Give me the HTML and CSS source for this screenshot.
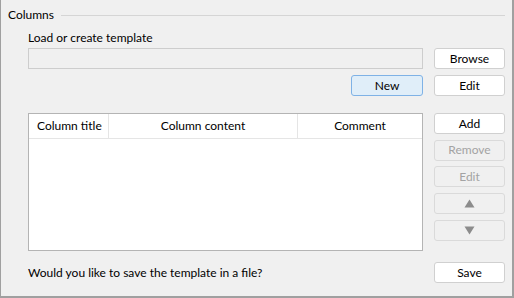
FILE: index.html
```html
<!DOCTYPE html>
<html>
<head>
<meta charset="utf-8">
<link rel="stylesheet" href="styles.css">
</head>
<body>
<div class="frame">
  <div class="legend">
    <span class="legend-text">Columns</span>
    <span class="legend-line"></span>
  </div>
  <div class="content">
    <div class="label">Load or create template</div>
    <div class="row row1">
      <div class="field"></div>
      <button class="btn">Browse</button>
    </div>
    <div class="row row2">
      <div class="main-right"><button class="btn btn-default">New</button></div>
      <button class="btn">Edit</button>
    </div>
    <div class="row row3">
      <div class="table">
        <div class="thead">
          <div class="th th-title">Column title</div>
          <div class="th th-content">Column content</div>
          <div class="th th-comment">Comment</div>
        </div>
      </div>
      <div class="side">
        <button class="btn">Add</button>
        <button class="btn disabled">Remove</button>
        <button class="btn disabled">Edit</button>
        <button class="btn disabled arrow"><svg width="11" height="9" viewBox="0 0 11 9"><polygon points="5.5,0.5 10.5,8.5 0.5,8.5" fill="#8c8c8c"/></svg></button>
        <button class="btn disabled arrow"><svg width="11" height="9" viewBox="0 0 11 9"><polygon points="0.5,0.5 10.5,0.5 5.5,8.5" fill="#8c8c8c"/></svg></button>
      </div>
    </div>
    <div class="row row4">
      <div class="question">Would you like to save the template in a file?</div>
      <button class="btn">Save</button>
    </div>
  </div>
</div>
</body>
</html>
```

FILE: styles.css
```css
html, body {
  margin: 0;
  padding: 0;
  background: #f0f0f0;
}
.frame {
  width: 514px;
  height: 298px;
  box-sizing: border-box;
  border-left: 1px solid #a0a0a0;
  border-right: 2px solid #a0a0a0;
  border-bottom: 2px solid #a0a0a0;
  background: #f0f0f0;
  font-family: "Segoe UI", Lato, "Noto Sans", sans-serif;
  font-size: 12px;
  color: #000;
  padding-right: 7px;
}
.legend {
  display: flex;
  align-items: center;
  height: 16px;
  padding-top: 7px;
  padding-left: 7px;
}
.legend-text {
  line-height: 16px;
}
.legend-line {
  flex: 1;
  height: 1px;
  background: #d5d5d5;
  margin-left: 7px;
}
.content {
  padding-left: 27px;
}
.label {
  margin-top: 7px;
  line-height: 16px;
  height: 16px;
}
.row {
  display: grid;
  grid-template-columns: 1fr 71px;
  column-gap: 11px;
}
.row1 {
  margin-top: 2px;
}
.row2 {
  margin-top: 6px;
}
.row3 {
  margin-top: 17px;
}
.row4 {
  margin-top: 11px;
  align-items: center;
}
.field {
  height: 21px;
  box-sizing: border-box;
  border: 1px solid #cdcdcd;
  background: #f0f0f0;
}
.btn {
  height: 21px;
  box-sizing: border-box;
  border: 1px solid #d0d0d0;
  border-radius: 3px;
  background: #fff;
  font-family: inherit;
  font-size: 12px;
  color: #000;
  padding: 0;
  line-height: 18px;
  margin: 0;
}
.btn-default {
  width: 72px;
  background: #e0eef9;
  border-color: #7fb2e6;
}
.main-right {
  display: flex;
  justify-content: flex-end;
}
.disabled {
  background: #f0f0f0;
  border-color: #dadada;
  color: #a3a3a3;
}
.arrow {
  display: flex;
  align-items: center;
  justify-content: center;
}
.table {
  height: 138px;
  box-sizing: border-box;
  border: 1px solid #b4b4b4;
  background: #fff;
}
.thead {
  display: grid;
  grid-template-columns: 80px 189px 1fr;
  height: 24px;
  border-bottom: 1px solid #e5e5e5;
}
.th {
  line-height: 24px;
  white-space: nowrap;
  border-right: 1px solid #e5e5e5;
}
.th-comment {
  border-right: none;
  text-align: center;
}
.th-title {
  padding-left: 8px;
}
.th-content {
  text-align: center;
}
.side {
  display: flex;
  flex-direction: column;
  gap: 5.7px;
}
.question {
  line-height: 16px;
}
```
